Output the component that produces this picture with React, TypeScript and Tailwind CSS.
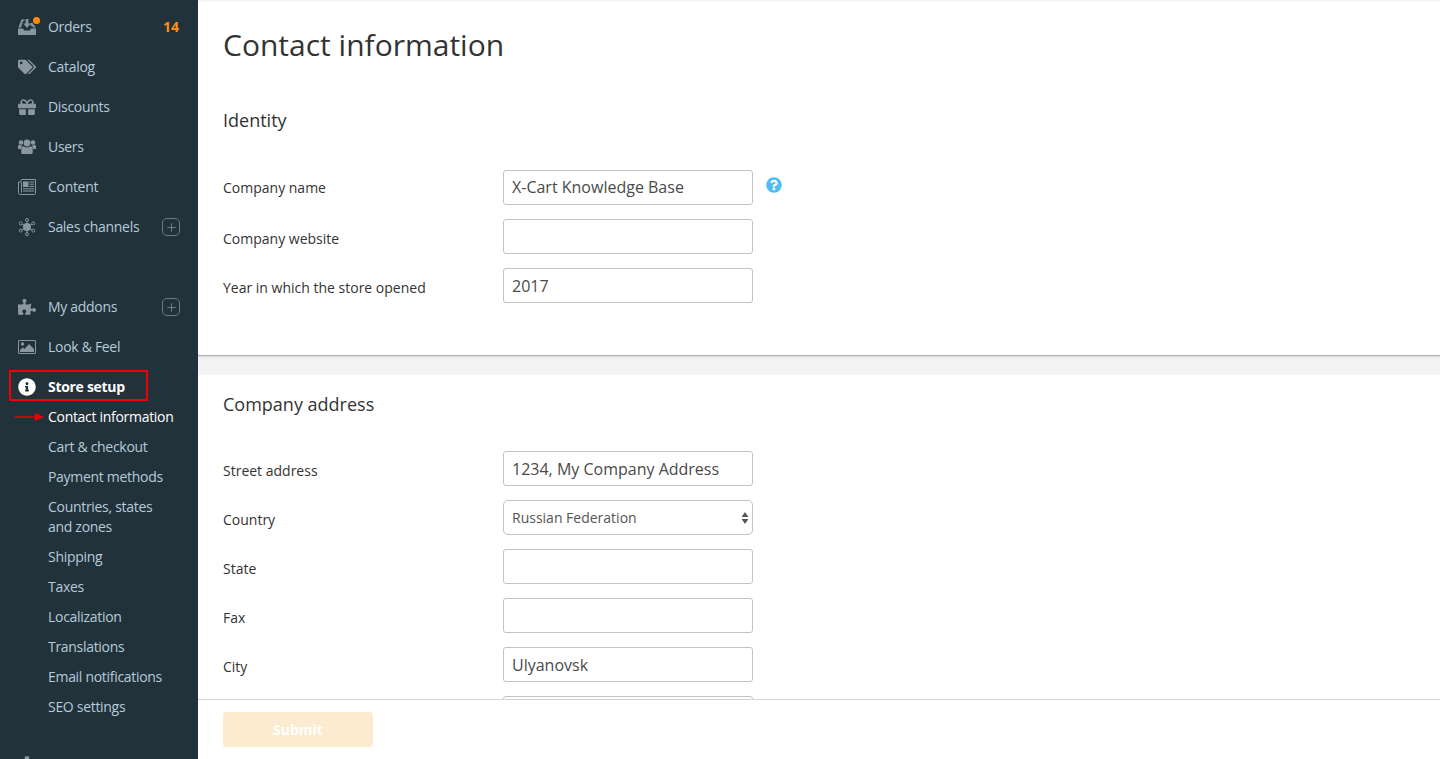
import { FaCog, FaGift, FaInfoCircle, FaPuzzlePiece, FaQuestionCircle, FaTags } from "react-icons/fa";
import { Plus } from "lucide-react";

function OrdersIcon() {
    return (
        <svg width="18" height="18" viewBox="0 0 18 18" fill="currentColor">
            <path d="M0 10.500h5l1 2h6l1-2h5V17H0z" />
            <path d="M3.500 1.500h3v1.600H5L3 9.500H.4z" />
            <path d="M12.500 5h2l3.200 4.500h-2.600l-.9-1.500H12.500z" />
            <path d="M7.600 1h2.800v4.400h2.300L9 10 5.300 5.400h2.300z" />
        </svg>
    );
}

function UsersIcon() {
    return (
        <svg width="18" height="18" viewBox="0 0 18 18" fill="currentColor">
            <circle cx="3" cy="4.500" r="2.300" />
            <circle cx="15" cy="4.500" r="2.300" />
            <circle cx="9" cy="5" r="3.400" />
            <path d="M0 8.200c0-1 1-1.500 2-1.500.6.700 1.400 1 2.400 1-.8.800-1.200 1.800-1.300 3.300H0zM18 8.200c0-1-1-1.500-2-1.500-.6.700-1.400 1-2.400 1 .8.800 1.200 1.800 1.300 3.300H18z" />
            <path d="M5.800 8.200c.8.800 2 1.200 3.200 1.200s2.400-.4 3.200-1.200c1.400 0 2.500 1 2.500 3v3.600c0 .8-.7 1.200-1.400 1.200H4.700c-.7 0-1.400-.4-1.400-1.200v-3.600c0-2 1.100-3 2.500-3z" />
        </svg>
    );
}

function NewsIcon() {
    return (
        <svg width="18" height="18" viewBox="0 0 18 18" fill="none" stroke="currentColor" strokeWidth="1">
            <path d="M3.500 1.500h14v14a1 1 0 0 1-1 1h-14a2 2 0 0 1-2-2V4h2z" />
            <path d="M3.500 4v10.500" />
            <rect x="5" y="3.500" width="5.500" height="5.500" fill="currentColor" stroke="none" />
            <path d="M11.500 4h4.500M11.500 6.200h4.500M11.500 8.500h4.500M5 10.800h11M5 13h11" />
        </svg>
    );
}

function ImageIcon() {
    return (
        <svg width="18" height="18" viewBox="0 0 18 18" fill="currentColor">
            <rect x="0.500" y="2.500" width="17" height="13" rx="0.500" fill="none" stroke="currentColor" strokeWidth="1" />
            <circle cx="4.500" cy="6" r="1.700" />
            <path d="M2 14v-2l3-2.500 1.500 1.500 4.500-5 5 5v3z" />
        </svg>
    );
}

function ChannelsIcon() {
    const spokes = [[9, 1.8], [15.3, 5.4], [15.3, 12.6], [9, 16.2], [2.7, 12.6], [2.7, 5.4]];
    return (
        <svg width="18" height="18" viewBox="0 0 18 18" stroke="currentColor" fill="none">
            {spokes.map(([x, y]) => (
                <g key={`${x}-${y}`}>
                    <line x1="9" y1="9" x2={x} y2={y} strokeWidth="1" />
                    <circle cx={x} cy={y} r="1.500" strokeWidth="1" fill="#22323a" />
                </g>
            ))}
            <circle cx="9" cy="9" r="4" fill="currentColor" stroke="none" />
        </svg>
    );
}

function PlusBox() {
    return (
        <span className="flex size-[18px] items-center justify-center rounded-[5px] border border-[#6c7a81] text-[#6c7a81]">
            <Plus size={13} strokeWidth={2} />
        </span>
    );
}

function NavItem({ icon, label, right, dot }: { icon: React.ReactNode; label: string; right?: React.ReactNode; dot?: boolean }) {
    return (
        <div className="flex h-10 items-center px-[18px] text-[#b4cbdb]">
            <span className="relative flex w-[30px] shrink-0 items-center text-[#8b979e]">
                {icon}
                {dot && <span className="absolute left-[15px] top-[-1px] size-[7px] rounded-full bg-[#ff8c00]" />}
            </span>
            <span className="flex-1">{label}</span>
            {right}
        </div>
    );
}

const SUB_LINKS = ["Cart & checkout", "Payment methods", "Countries, states and zones", "Shipping", "Taxes", "Localization", "Translations", "Email notifications", "SEO settings"];

function Sidebar() {
    return (
        <aside className="h-full w-[198px] shrink-0 overflow-hidden bg-[#22323a] pt-[7px] text-sm leading-5 tracking-[-0.3px]">
            <NavItem dot icon={<OrdersIcon />} label="Orders" right={<span className="pr-[1px] font-bold tracking-normal text-[#ff8c1a]">14</span>} />
            <NavItem icon={<FaTags size={18} />} label="Catalog" />
            <NavItem icon={<FaGift size={18} />} label="Discounts" />
            <NavItem icon={<UsersIcon />} label="Users" />
            <NavItem icon={<NewsIcon />} label="Content" />
            <NavItem icon={<ChannelsIcon />} label="Sales channels" right={<PlusBox />} />
            <div className="h-10" />
            <NavItem icon={<FaPuzzlePiece size={18} />} label="My addons" right={<PlusBox />} />
            <NavItem icon={<ImageIcon />} label="Look & Feel" />
            <div className="relative flex h-10 items-center pl-[18px] font-bold text-white">
                <span className="flex w-[30px] shrink-0"><FaInfoCircle size={18} /></span>
                Store setup
                <span className="absolute left-[9px] top-[3px] h-[31px] w-[139px] border-2 border-[#f00000]" />
            </div>
            <div className="relative flex h-[20px] items-center pl-[48px] text-white">
                Contact information
                <svg className="absolute left-[15px] top-[6px]" width="29" height="8" viewBox="0 0 29 8" fill="#f00000">
                    <path d="M0 3.200h20V0l9 4-9 4V4.800H0z" />
                </svg>
            </div>
            <div className="w-[170px] pl-[48px] pt-[5px] text-[#b4cbdb]">
                {SUB_LINKS.map((link) => (
                    <div key={link} className="py-[5px]">{link}</div>
                ))}
            </div>
            <div className="mt-[34px] pl-[18px] text-[#8b979e]"><FaCog size={18} /></div>
        </aside>
    );
}

function FieldLabel({ children, first }: { children?: React.ReactNode; first?: boolean }) {
    return <label className={first ? "w-[280px] shrink-0 pt-[1px] text-sm text-[#333]" : "w-[280px] shrink-0 pt-[5px] text-sm text-[#333]"}>{children}</label>;
}

function Field({ label, value, first, help }: { label: string; value?: string; first?: boolean; help?: boolean }) {
    return (
        <div className="flex h-[35px] items-center">
            <FieldLabel first={first}>{label}</FieldLabel>
            <input
                readOnly
                defaultValue={value}
                className={first
                    ? "h-[35px] w-[250px] rounded-[3px] border border-[#c3c3c3] bg-white px-2 pb-[2px] text-base text-[#4a4a4a] outline-none"
                    : "h-[35px] w-[250px] rounded-[3px] border border-[#c3c3c3] bg-white px-2 text-base text-[#4a4a4a] outline-none"}
            />
            {help && <FaQuestionCircle size={16} className="mb-[5px] ml-[13px] text-[#4fbdf5]" />}
        </div>
    );
}

function CountrySelect() {
    return (
        <div className="flex h-[35px] items-center">
            <FieldLabel>Country</FieldLabel>
            <div className="flex h-[35px] w-[250px] items-center justify-between rounded-[5px] border border-[#c3c3c3] bg-white pl-2 pr-[3px] text-sm text-[#555]">
                Russian Federation
                <svg width="8" height="14" viewBox="0 0 8 14" fill="#555">
                    <path d="M4 1l3.400 5H.6zM4 13L.6 8h6.800z" />
                </svg>
            </div>
        </div>
    );
}

export default function App() {
    return (
        <div className="flex h-screen overflow-hidden bg-white text-[#333] [font-family:'Open_Sans',sans-serif]">
            <Sidebar />
            <div className="flex min-w-0 flex-1 flex-col">
                <main className="min-h-0 flex-1 overflow-hidden">
                    <section className="relative h-[356px] border-b border-[#b0b0b0] pl-[25px] pt-[22px] shadow-[inset_0_3px_3px_-3px_rgba(0,0,0,0.15),0_1px_2px_rgba(0,0,0,0.12)]">
                        <h1 className="text-[30px] leading-[46px] text-[#333]">Contact information</h1>
                        <h2 className="mt-[39px] text-lg leading-[26px]">Identity</h2>
                        <div className="mt-[37px] flex flex-col gap-[14px]">
                            <Field first label="Company name" value="X-Cart Knowledge Base" help />
                            <Field label="Company website" />
                            <Field label="Year in which the store opened" value="2017" />
                        </div>
                    </section>
                    <div className="h-[19px] bg-[#f3f3f3]" />
                    <section className="pl-[25px] pt-4">
                        <h2 className="text-lg leading-[26px]">Company address</h2>
                        <div className="mt-[34px] flex flex-col gap-[14px]">
                            <Field label="Street address" value="1234, My Company Address" />
                            <CountrySelect />
                            <Field label="State" />
                            <Field label="Fax" />
                            <Field label="City" value="Ulyanovsk" />
                            <Field label="" />
                        </div>
                    </section>
                </main>
                <footer className="h-[60px] shrink-0 border-t border-[#d6d6d6] bg-white pl-[25px] pt-3">
                    <button className="h-[35px] w-[150px] rounded-[3px] bg-[#fdebd0] text-sm font-bold text-white">Submit</button>
                </footer>
            </div>
        </div>
    );
}
